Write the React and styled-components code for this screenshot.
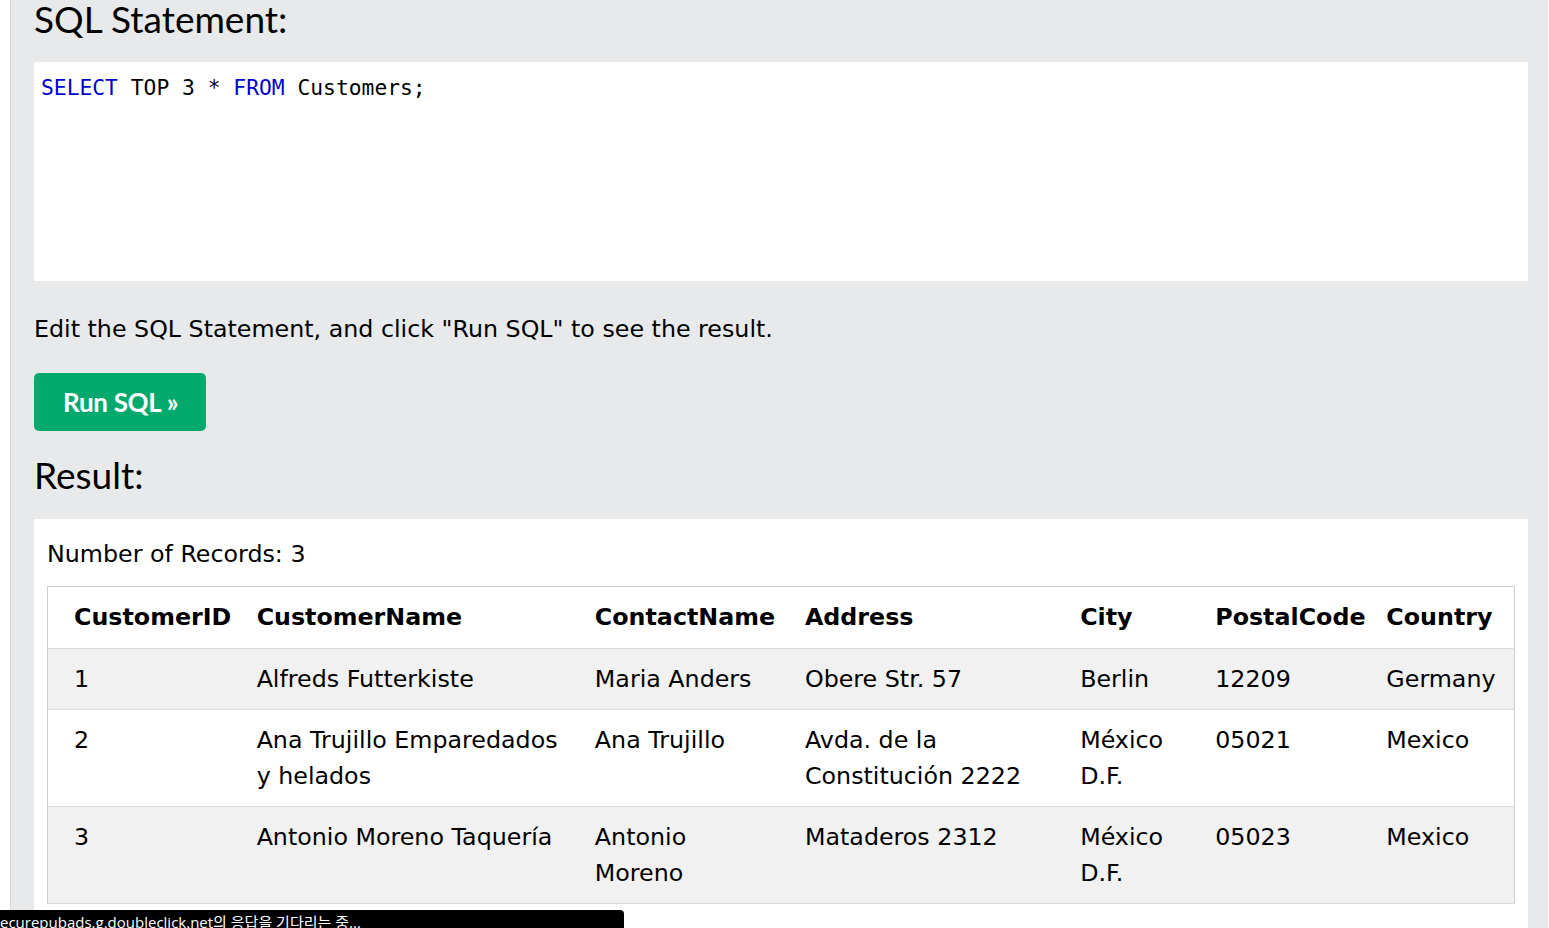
import React from "react";
import styled, { createGlobalStyle } from "styled-components";

const Global = createGlobalStyle`
  html, body { margin: 0; padding: 0; background: #ffffff; overflow: hidden; }
  body { font-family: "DejaVu Sans", Verdana, sans-serif; color: #000; }
`;

const Page = styled.div`
  height: 928px;
  overflow: hidden;
  display: flex;
  background: #ffffff;
`;

const Shell = styled.div`
  margin-left: 10px;
  margin-right: 1px;
  flex: 1;
  border-left: 1px solid #d6d6d6;
  background: #e7e9eb;
  padding: 0 20px 0 23px;
  display: flex;
  flex-direction: column;
  & > * { flex-shrink: 0; }
`;

const Heading = styled.h3`
  margin: ${(p) => p.$top || 0}px 0 0 0;
  font-family: Lato, "Open Sans", sans-serif;
  font-weight: 400;
  font-size: 37px;
  line-height: 38px;
  color: #000;
`;

const CodeBox = styled.div`
  margin-top: 24px;
  height: 219px;
  background: #fff;
  padding: 14px 7px;
  box-sizing: border-box;
  font-family: "DejaVu Sans Mono", "Liberation Mono", monospace;
  font-size: 21.3px;
  line-height: 24px;
  white-space: pre;
  color: #000;
`;

const Kw = styled.span`
  color: #0000cd;
`;

const Hint = styled.p`
  margin: 30px 0 0 0;
  font-size: 23.75px;
  line-height: 36px;
`;

const RunButton = styled.button`
  margin-top: 26px;
  align-self: flex-start;
  height: 58px;
  padding: 0 28px 0 29px;
  border: none;
  border-radius: 5px;
  background: #04aa6d;
  color: #fff;
  font-family: Lato, "Open Sans", sans-serif;
  font-weight: 700;
  font-size: 26px;
  letter-spacing: -0.3px;
  cursor: pointer;
`;

const ResultPanel = styled.div`
  margin-top: 25px;
  flex: 1 0 auto;
  background: #fff;
  padding: 17px 13px 40px 13px;
`;

const Count = styled.div`
  font-size: 23.75px;
  line-height: 36px;
  margin-bottom: 14px;
`;

const Table = styled.table`
  width: 100%;
  border-collapse: collapse;
  table-layout: fixed;
  border: 1px solid #cccccc;
  font-size: 23.75px;
  line-height: 36px;
`;

const Th = styled.th`
  text-align: left;
  font-weight: 700;
  padding: 12px 8px 13px ${(p) => (p.$first ? 26 : 12)}px;
  vertical-align: top;
  white-space: nowrap;
`;

const Tr = styled.tr`
  background: ${(p) => (p.$alt ? "#f1f1f1" : "#ffffff")};
  border-bottom: 1px solid #dddddd;
`;

const Td = styled.td`
  padding: 12px 16px 12px ${(p) => (p.$first ? 26 : 12)}px;
  vertical-align: top;
  color: #000;
`;

const Status = styled.div`
  position: fixed;
  left: 0;
  bottom: -6px;
  width: 624px;
  height: 24px;
  background: #000;
  border-top-right-radius: 4px;
  color: #fff;
  font-family: "Open Sans", "Noto Sans CJK KR", sans-serif;
  font-size: 15px;
  line-height: 24px;
  white-space: nowrap;
  overflow: hidden;
`;

const cols = [197, 338, 210, 275, 135, 171, 140];
const headers = ["CustomerID", "CustomerName", "ContactName", "Address", "City", "PostalCode", "Country"];
const rows = [
  ["1", "Alfreds Futterkiste", "Maria Anders", "Obere Str. 57", "Berlin", "12209", "Germany"],
  ["2", "Ana Trujillo Emparedados y helados", "Ana Trujillo", "Avda. de la Constitución 2222", "México D.F.", "05021", "Mexico"],
  ["3", "Antonio Moreno Taquería", "Antonio Moreno", "Mataderos 2312", "México D.F.", "05023", "Mexico"],
];

export default function App() {
  return (
    <Page>
      <Global />
      <Shell>
        <Heading>SQL Statement:</Heading>
        <CodeBox>
          <Kw>SELECT</Kw> TOP 3 * <Kw>FROM</Kw> Customers;
        </CodeBox>
        <Hint>Edit the SQL Statement, and click "Run SQL" to see the result.</Hint>
        <RunButton>Run SQL »</RunButton>
        <Heading $top={25}>Result:</Heading>
        <ResultPanel>
          <Count>Number of Records: 3</Count>
          <Table>
            <colgroup>
              {cols.map((w, i) => (
                <col key={i} style={{ width: w }} />
              ))}
            </colgroup>
            <thead>
              <Tr>
                {headers.map((h, i) => (
                  <Th key={h} $first={i === 0}>{h}</Th>
                ))}
              </Tr>
            </thead>
            <tbody>
              {rows.map((r, ri) => (
                <Tr key={ri} $alt={ri % 2 === 0}>
                  {r.map((c, ci) => (
                    <Td key={ci} $first={ci === 0}>{c}</Td>
                  ))}
                </Tr>
              ))}
            </tbody>
          </Table>
        </ResultPanel>
      </Shell>
      <Status>ecurepubads.g.doubleclick.net의 응답을 기다리는 중...</Status>
    </Page>
  );
}
